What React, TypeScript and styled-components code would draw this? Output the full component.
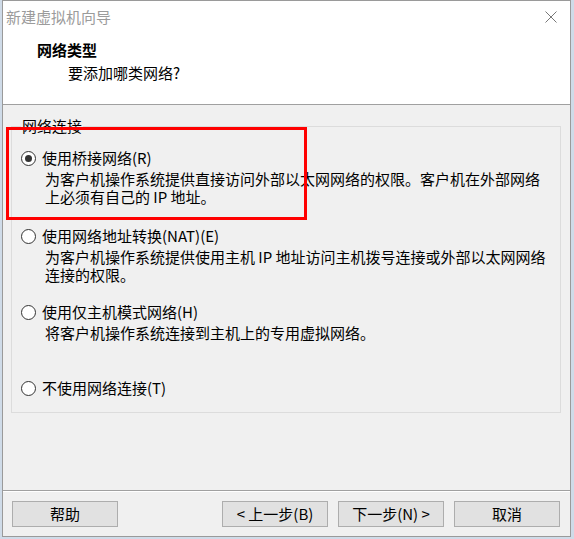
import styled, { createGlobalStyle } from "styled-components";

const GlobalStyle = createGlobalStyle`
  html, body {
    margin: 0;
    padding: 0;
    background: #cfdbe8;
  }
  body {
    font-family: "Noto Sans CJK SC", "Noto Sans", sans-serif;
    font-size: 15px;
    color: #000;
  }
`;

const Window = styled.div`
  position: relative;
  box-sizing: border-box;
  margin-left: 2px;
  width: 569px;
  height: 537px;
  border: 1px solid #9a9a9a;
  background: #f0f0f0;
  display: flex;
  flex-direction: column;
`;

const Header = styled.div`
  box-sizing: border-box;
  height: 104px;
  background: #fff;
  border-bottom: 1px solid #a0a0a0;
  padding-top: 6px;
`;

const TitleRow = styled.div`
  display: flex;
  align-items: center;
  justify-content: space-between;
  height: 20px;
  padding-left: 3px;
  padding-right: 13px;
`;

const Title = styled.span`
  color: #9b9b9b;
  line-height: 20px;
`;

const Heading = styled.div`
  margin-top: 13px;
  padding-left: 34px;
  font-weight: bold;
  line-height: 20px;
`;

const SubHeading = styled.div`
  margin-top: 3px;
  padding-left: 65px;
  line-height: 20px;
`;

const Body = styled.div`
  flex: 1;
  padding: 21px 9px 0 8px;
`;

const Group = styled.div`
  position: relative;
  box-sizing: border-box;
  height: 287px;
  border: 1px solid #dcdcdc;
  padding: 22px 0 0 9px;
  display: grid;
  grid-template-rows: 78px 76px 76px auto;
`;

const Legend = styled.span`
  position: absolute;
  top: -10px;
  left: 9px;
  padding: 0 1px;
  background: #f0f0f0;
  line-height: 18px;
`;

const Option = styled.div`
  display: flex;
  flex-direction: column;
`;

const OptionRow = styled.label`
  display: flex;
  align-items: center;
  gap: 6px;
  line-height: 18px;
`;

const Radio = styled.span<{ $checked?: boolean }>`
  box-sizing: border-box;
  width: 15px;
  height: 15px;
  border-radius: 50%;
  border: 1px solid #333;
  background: #fff;
  display: flex;
  align-items: center;
  justify-content: center;
  &::after {
    content: "";
    width: 7px;
    height: 7px;
    border-radius: 50%;
    background: ${({ $checked }) => ($checked ? "#333" : "transparent")};
  }
`;

const Description = styled.div`
  margin-top: 3px;
  margin-left: 24px;
  line-height: 18px;
`;

const Highlight = styled.div`
  position: absolute;
  left: 3px;
  top: 126px;
  width: 301px;
  height: 93px;
  box-sizing: border-box;
  border: 3px solid #ff0000;
  pointer-events: none;
`;

const Footer = styled.div`
  box-sizing: border-box;
  height: 46px;
  border-top: 1px solid #a0a0a0;
  box-shadow: inset 0 1px #fff;
  padding: 10px 0 0 9px;
  display: flex;
  gap: 10px;
`;

const Button = styled.button<{ $push?: boolean }>`
  box-sizing: border-box;
  width: 106px;
  height: 26px;
  margin-left: ${({ $push }) => ($push ? "94px" : "0")};
  border: 1px solid #adadad;
  background: #e1e1e1;
  font-family: inherit;
  font-size: 15px;
  color: #000;
  padding: 0;
  line-height: 24px;
`;

const CloseIcon = () => (
  <svg width="12" height="12" viewBox="0 0 12 12">
    <path d="M0.5 0.5 L11.5 11.5 M11.5 0.5 L0.5 11.5" stroke="#777" strokeWidth="1" fill="none" />
  </svg>
);

const options = [
  {
    label: "使用桥接网络(R)",
    checked: true,
    desc: ["为客户机操作系统提供直接访问外部以太网网络的权限。客户机在外部网络", "上必须有自己的 IP 地址。"],
  },
  {
    label: "使用网络地址转换(NAT)(E)",
    desc: ["为客户机操作系统提供使用主机 IP 地址访问主机拨号连接或外部以太网网络", "连接的权限。"],
  },
  {
    label: "使用仅主机模式网络(H)",
    desc: ["将客户机操作系统连接到主机上的专用虚拟网络。"],
  },
  {
    label: "不使用网络连接(T)",
    desc: [],
  },
];

const App = () => {
  return (
    <>
      <GlobalStyle />
      <Window>
        <Header>
          <TitleRow>
            <Title>新建虚拟机向导</Title>
            <CloseIcon />
          </TitleRow>
          <Heading>网络类型</Heading>
          <SubHeading>要添加哪类网络?</SubHeading>
        </Header>
        <Body>
          <Group>
            <Legend>网络连接</Legend>
            {options.map((o) => (
              <Option key={o.label}>
                <OptionRow>
                  <Radio $checked={o.checked} />
                  {o.label}
                </OptionRow>
                {o.desc.length > 0 && (
                  <Description>
                    {o.desc.map((line) => (
                      <div key={line}>{line}</div>
                    ))}
                  </Description>
                )}
              </Option>
            ))}
          </Group>
        </Body>
        <Footer>
          <Button>帮助</Button>
          <Button $push>&lt; 上一步(B)</Button>
          <Button>下一步(N) &gt;</Button>
          <Button>取消</Button>
        </Footer>
        <Highlight />
      </Window>
    </>
  );
};

export default App;
